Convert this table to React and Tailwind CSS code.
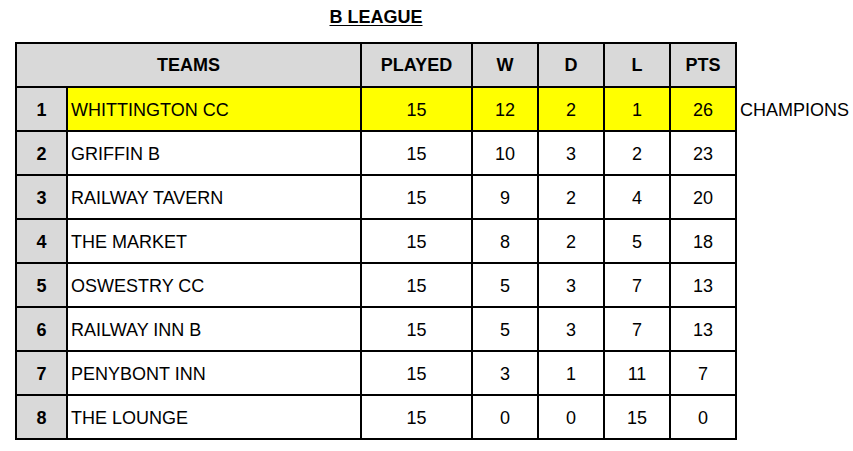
import React from "react";

const rows = [
  { pos: 1, team: "WHITTINGTON CC", p: 15, w: 12, d: 2, l: 1, pts: 26, champ: true },
  { pos: 2, team: "GRIFFIN B", p: 15, w: 10, d: 3, l: 2, pts: 23 },
  { pos: 3, team: "RAILWAY TAVERN", p: 15, w: 9, d: 2, l: 4, pts: 20 },
  { pos: 4, team: "THE MARKET", p: 15, w: 8, d: 2, l: 5, pts: 18 },
  { pos: 5, team: "OSWESTRY CC", p: 15, w: 5, d: 3, l: 7, pts: 13 },
  { pos: 6, team: "RAILWAY INN B", p: 15, w: 5, d: 3, l: 7, pts: 13 },
  { pos: 7, team: "PENYBONT INN", p: 15, w: 3, d: 1, l: 11, pts: 7 },
  { pos: 8, team: "THE LOUNGE", p: 15, w: 0, d: 0, l: 15, pts: 0 },
];

export default function App() {
  return (
    <div className="w-[853px] h-[451px] bg-white text-black pt-[6px] pl-[15px] font-['Liberation_Sans',Arial,sans-serif] text-[18px]">
      <div className="flex items-start">
        <div className="flex flex-col">
          {/* Title */}
          <div className="text-center font-bold underline leading-[22px] underline-offset-[2px]">
            B LEAGUE
          </div>

          {/* Table */}
          <div className="mt-[14px] grid grid-cols-[49px_292px_109px_64px_64px_64px_64px] auto-rows-[42px] gap-[2px] p-[2px] bg-black">
            <div className="col-span-2 bg-[#d9d9d9] flex items-center justify-center font-bold">TEAMS</div>
            <div className="bg-[#d9d9d9] flex items-center justify-center font-bold">PLAYED</div>
            <div className="bg-[#d9d9d9] flex items-center justify-center font-bold">W</div>
            <div className="bg-[#d9d9d9] flex items-center justify-center font-bold">D</div>
            <div className="bg-[#d9d9d9] flex items-center justify-center font-bold">L</div>
            <div className="bg-[#d9d9d9] flex items-center justify-center font-bold">PTS</div>

            {rows.map((r) => {
              const bg = r.champ ? "bg-[#ffff00]" : "bg-white";
              return (
                <React.Fragment key={r.pos}>
                  <div className="bg-[#d9d9d9] flex items-center justify-center pt-[2px] font-bold">{r.pos}</div>
                  <div className={`${bg} flex items-center pt-[2px] pl-[3px]`}>{r.team}</div>
                  <div className={`${bg} flex items-center justify-center pt-[2px]`}>{r.p}</div>
                  <div className={`${bg} flex items-center justify-center pt-[2px]`}>{r.w}</div>
                  <div className={`${bg} flex items-center justify-center pt-[2px]`}>{r.d}</div>
                  <div className={`${bg} flex items-center justify-center pt-[2px]`}>{r.l}</div>
                  <div className={`${bg} flex items-center justify-center pt-[2px]`}>{r.pts}</div>
                </React.Fragment>
              );
            })}
          </div>
        </div>

        {/* Champions label beside row 1 */}
        <div className="mt-[82px] ml-[3px] h-[42px] pt-[2px] flex items-center">CHAMPIONS</div>
      </div>
    </div>
  );
}
